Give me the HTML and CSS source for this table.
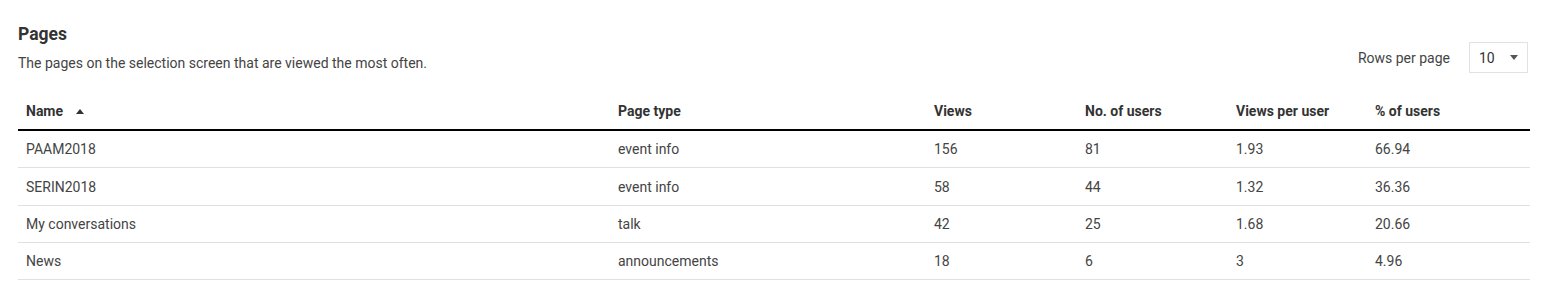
FILE: index.html
```html
<!DOCTYPE html>
<html lang="en">
<head>
<meta charset="utf-8">
<title>Pages</title>
<link rel="stylesheet" href="styles.css">
</head>
<body>
<section class="card">
  <div class="head">
    <div class="titles">
      <h2 class="title">Pages</h2>
      <p class="subtitle">The pages on the selection screen that are viewed the most often.</p>
    </div>
    <div class="rpp">
      <span class="rpp-label">Rows per page</span>
      <div class="select"><span>10</span><span class="caret"></span></div>
    </div>
  </div>
  <table class="grid">
    <colgroup>
      <col class="c1"><col class="c2"><col class="c3"><col class="c4"><col class="c5"><col class="c6">
    </colgroup>
    <thead>
      <tr>
        <th>Name <span class="sort"></span></th>
        <th>Page type</th>
        <th>Views</th>
        <th>No. of users</th>
        <th>Views per user</th>
        <th>% of users</th>
      </tr>
    </thead>
    <tbody>
      <tr><td>PAAM2018</td><td>event info</td><td>156</td><td>81</td><td>1.93</td><td>66.94</td></tr>
      <tr class="tall"><td>SERIN2018</td><td>event info</td><td>58</td><td>44</td><td>1.32</td><td>36.36</td></tr>
      <tr><td>My conversations</td><td>talk</td><td>42</td><td>25</td><td>1.68</td><td>20.66</td></tr>
      <tr><td>News</td><td>announcements</td><td>18</td><td>6</td><td>3</td><td>4.96</td></tr>
    </tbody>
  </table>
</section>
</body>
</html>
```
FILE: styles.css
```css
html, body {
  margin: 0;
  padding: 0;
  background: #fff;
}
body {
  font-family: Roboto, "Liberation Sans", Arial, sans-serif;
  color: #444;
}
.card {
  padding: 23px 20px 0 18px;
}
.head {
  display: flex;
  justify-content: space-between;
  align-items: flex-start;
}
.title {
  margin: 0;
  font-size: 17.5px;
  font-weight: 700;
  color: #333;
  line-height: 22px;
}
.subtitle {
  margin: 10px 0 0;
  font-size: 14px;
  line-height: 16px;
  color: #444;
}
.rpp {
  display: flex;
  align-items: center;
  margin-top: 19px;
  margin-right: 2px;
}
.rpp-label {
  font-size: 14px;
  color: #444;
  margin-right: 19px;
}
.select {
  box-sizing: border-box;
  width: 59px;
  height: 31px;
  border: 1px solid #e2e2e2;
  display: flex;
  align-items: center;
  justify-content: space-between;
  padding: 0 9px 0 9px;
  font-size: 14px;
  color: #333;
}
.caret {
  width: 0;
  height: 0;
  border-left: 4.5px solid transparent;
  border-right: 4.5px solid transparent;
  border-top: 5px solid #555;
}
.grid {
  margin-top: 20px;
  width: 1512px;
  border-collapse: collapse;
  table-layout: fixed;
  font-size: 14px;
}
.c1 { width: 592px; }
.c2 { width: 316px; }
.c3 { width: 151px; }
.c4 { width: 151px; }
.c5 { width: 139px; }
.c6 { width: 163px; }
.grid th {
  text-align: left;
  font-weight: 700;
  color: #333;
  padding: 0 8px;
  height: 36px;
  border-bottom: 2px solid #000;
}
.grid td {
  padding: 0 8px;
  height: 36px;
  color: #444;
  border-bottom: 1px solid #e0e0e0;
}
.grid tr.tall td {
  height: 37px;
}
.sort {
  display: inline-block;
  width: 0;
  height: 0;
  margin-left: 9px;
  vertical-align: 2px;
  border-left: 4px solid transparent;
  border-right: 4px solid transparent;
  border-bottom: 5px solid #333;
}
```
